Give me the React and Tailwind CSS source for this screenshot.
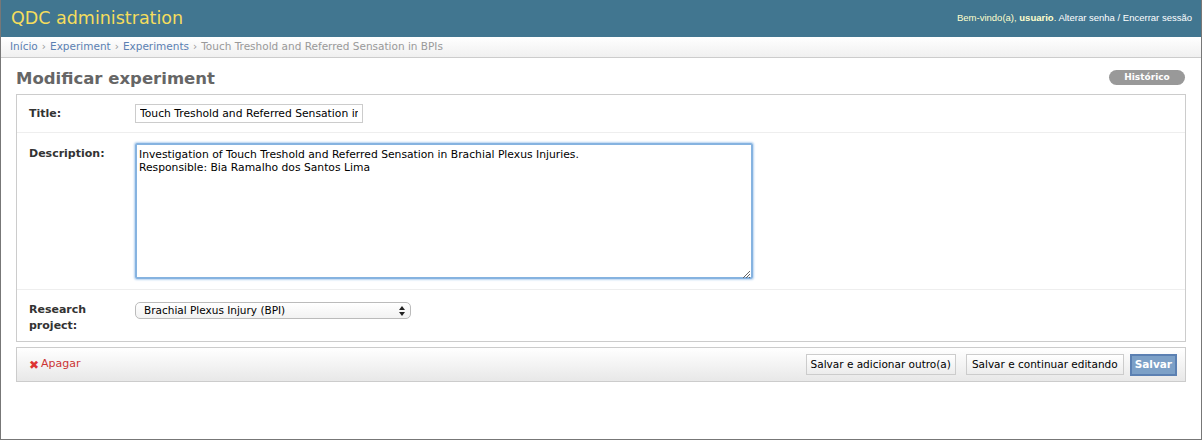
import React from "react";

const font = { fontFamily: '"DejaVu Sans", Verdana, sans-serif' };

const Row = ({ label, children, className = "", labelClass = "" }) => (
  <div className={`flex border-b border-[#eee] pl-[12px] ${className}`}>
    <label className={`w-[106px] shrink-0 text-[11px] font-bold leading-[15px] text-[#333] ${labelClass}`}>
      {label}
    </label>
    <div>{children}</div>
  </div>
);

export default function App() {
  return (
    <div
      className="flex h-[440px] w-[1202px] flex-col overflow-hidden border-x border-b border-[#777] bg-white text-[11px] text-[#333]"
      style={font}
    >
      <div className="flex h-[37px] shrink-0 items-center justify-between bg-[#417690] pl-[10px] pr-[9px]">
        <h1 className="text-[17.5px] leading-none text-[#f5dd5d]">QDC administration</h1>
        <div className="font-['Liberation_Sans',Arial,sans-serif] text-[9.5px] text-white">
          <span className="text-[#ffc]">
            Bem-vindo(a), <b>usuario</b>.
          </span>{" "}
          <a href="#" className="text-white">Alterar senha</a> /{" "}
          <a href="#" className="text-white">Encerrar sessão</a>
        </div>
      </div>

      <div className="flex h-[21px] shrink-0 items-center border-b border-[#ccc] bg-gradient-to-b from-white to-[#f0f0f0] pl-[9px] text-[10.5px] text-[#999]">
        <a href="#" className="text-[#5b80b2]">Início</a>
        <span className="mx-1">›</span>
        <a href="#" className="text-[#5b80b2]">Experiment</a>
        <span className="mx-1">›</span>
        <a href="#" className="text-[#5b80b2]">Experiments</a>
        <span className="mx-1">›</span>
        <span>Touch Treshold and Referred Sensation in BPIs</span>
      </div>

      <div className="px-[15px] pt-[10px]">
        <div className="flex h-[26px] items-start justify-between">
          <h1 className="text-[16.5px] font-bold leading-[22px] text-[#666]">Modificar experiment</h1>
          <a
            href="#"
            className="mt-[2px] mr-[1px] flex h-[15px] w-[76px] items-center justify-center rounded-full bg-[#999] text-[9px] font-bold text-white"
          >
            Histórico
          </a>
        </div>

        <div className="border border-[#ccc]">
          <Row label="Title:" className="h-[38px] items-center">
            <input
              readOnly
              value="Touch Treshold and Referred Sensation in BPIs"
              className="h-[19px] w-[228px] border border-[#ccc] px-[4px] text-[10.75px] text-black outline-none"
              style={font}
            />
          </Row>
          <Row label="Description:" className="h-[157px] pt-[10px]" labelClass="pt-[3px]">
            <div className="relative">
              <textarea
                readOnly
                value={
                  "Investigation of Touch Treshold and Referred Sensation in Brachial Plexus Injuries.\nResponsible: Bia Ramalho dos Santos Lima"
                }
                className="h-[136px] w-[618px] resize-none rounded-[2px] border-2 border-[#86b3e0] px-[2px] py-[3px] text-[10.75px] leading-[13px] text-black shadow-[0_0_2px_1px_#b7d3f0] outline-none"
                style={font}
              />
              <svg className="absolute bottom-[6px] right-[2px]" width="9" height="9" viewBox="0 0 9 9">
                <path d="M8 1L1 8M8 4L4 8M8 7L7 8" stroke="#666" strokeWidth="1" />
              </svg>
            </div>
          </Row>
          <Row
            label={<>Research<br />project:</>}
            className="h-[51px] border-b-0 pt-[11px]"
            labelClass="pt-[1px] leading-[16px]"
          >
            <div className="mt-[1px] flex h-[17px] w-[276px] items-center justify-between rounded-[5px] border border-[#bbb] bg-gradient-to-b from-white to-[#f2f2f2] pl-[8px] pr-[5px] text-[10.5px] text-black">
              <span>Brachial Plexus Injury (BPI)</span>
              <svg width="6" height="10" viewBox="0 0 6 10">
                <path d="M3 0L6 4H0Z M3 10L0 6H6Z" fill="#222" />
              </svg>
            </div>
          </Row>
        </div>

        <div className="mt-[5px] flex h-[35px] items-center justify-between border border-[#ccc] bg-gradient-to-b from-white to-[#e8e8e8] pl-[12px] pr-[8px]">
          <a href="#" className="flex items-center gap-[2px] text-[11px] text-[#cc3434]">
            <span className="text-[12px] leading-none text-[#d33]">✖</span>
            Apagar
          </a>
          <div className="flex items-center">
            <button className="h-[21px] border border-[#ccc] bg-gradient-to-b from-white to-[#ececec] px-[4px] text-[10.5px] text-black" style={font}>
              Salvar e adicionar outro(a)
            </button>
            <button className="ml-[10px] h-[21px] border border-[#ccc] bg-gradient-to-b from-white to-[#ececec] px-[5px] text-[10.5px] text-black" style={font}>
              Salvar e continuar editando
            </button>
            <button className="ml-[6px] h-[22px] border-2 border-[#5b80b2] bg-[#7ca0c7] px-[3px] text-[10.5px] font-bold text-white" style={font}>
              Salvar
            </button>
          </div>
        </div>
      </div>
    </div>
  );
}
